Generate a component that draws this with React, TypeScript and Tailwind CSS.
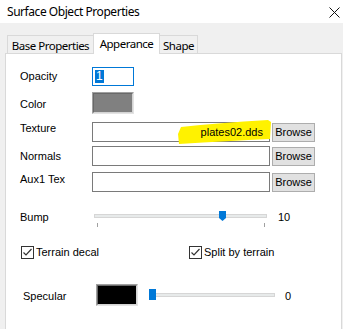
import React from "react";

const lbl = "font-['Liberation_Sans',Arial,sans-serif] text-[11px] leading-[13px] text-black";

function Swatch({ color, w }: { color: string; w: string }) {
  return (
    <div className={`${w} h-[22px] border border-t-[#a0a0a0] border-l-[#a0a0a0] border-b-[#e3e3e3] border-r-[#e3e3e3] flex`}>
      <div className={`flex-1 border border-t-[#696969] border-l-[#696969] border-b-[#d4d4d4] border-r-[#d4d4d4]`} style={{ background: color }} />
    </div>
  );
}

function BrowseButton() {
  return (
    <div className={`ml-[2px] mt-[1px] w-[43px] h-[19px] bg-[#e1e1e1] border border-[#adadad] flex items-center justify-center ${lbl}`}>
      Browse
    </div>
  );
}

function Checkbox({ label }: { label: string }) {
  return (
    <div className="flex items-center h-[13px]">
      <div className="w-[13px] h-[13px] border border-[#333333] bg-white flex items-center justify-center">
        <svg width="11" height="11" viewBox="0 0 11 11">
          <path d="M1.5 5.5 L4 8 L9.5 2" fill="none" stroke="#333333" strokeWidth="1.2" />
        </svg>
      </div>
      <span className={`ml-[2px] ${lbl} text-[11.5px]`}>{label}</span>
    </div>
  );
}

export default function App() {
  return (
    <div className="w-[343px] h-[329px] bg-[#f0f0f0] overflow-hidden flex flex-col">
      {/* Title bar */}
      <div className="h-[23px] shrink-0 bg-white flex items-center justify-between pl-[7px] pr-[2px]">
        <span className="font-['Noto_Sans',sans-serif] text-[12px] tracking-[-0.45px] leading-[16px] text-black mt-[1px]">
          Surface Object Properties
        </span>
        <svg width="11" height="11" viewBox="0 0 11 11" className="mr-[1px] mt-[2px]">
          <path d="M0.5 0.5 L10.5 10.5 M10.5 0.5 L0.5 10.5" stroke="#111" strokeWidth="1" />
        </svg>
      </div>
      <div className="h-[10px] shrink-0" />
      {/* Tabs */}
      <div className="h-[21px] shrink-0 flex items-end pl-[7px] relative z-10 font-['Noto_Sans',sans-serif] text-[11.5px] tracking-[-0.5px] text-black">
        <div className="mb-[1px] h-[18px] w-[86px] border-l border-t border-[#d9d9d9] bg-[#f0f0f0] flex items-center justify-center leading-[14px] pt-[2px]">
          Base Properties
        </div>
        <div className="h-[21px] w-[67px] border-l border-t border-r border-[#d9d9d9] bg-white flex items-start justify-center leading-[14px] pt-[3px]">
          Apperance
        </div>
        <div className="mb-[1px] h-[18px] w-[38px] border-t border-r border-[#d9d9d9] bg-[#f0f0f0] flex items-center justify-center leading-[14px] pt-[2px]">
          Shape
        </div>
      </div>
      {/* Panel */}
      <div className="-mt-[1px] ml-[5px] mr-[1px] h-[300px] shrink-0 bg-white border border-[#d9d9d9] flex flex-col pl-[14px]">
        {/* Opacity */}
        <div className="mt-[13px] h-[19px] flex items-center">
          <span className={`w-[72px] ${lbl}`}>Opacity</span>
          <div className="w-[42px] h-[19px] border border-[#0078d7] bg-white flex items-center pl-[2px]">
            <span className={`bg-[#0078d7] text-white px-[1px] ${lbl} text-[12px]`}>1</span>
          </div>
        </div>
        {/* Color */}
        <div className="mt-[6px] h-[22px] flex items-center">
          <span className={`w-[72px] ${lbl} mt-[2px]`}>Color</span>
          <Swatch color="#808080" w="w-[42px]" />
        </div>
        {/* Texture */}
        <div className="mt-[8px] h-[20px] flex items-start">
          <span className={`w-[72px] ${lbl} mt-[0px]`}>Texture</span>
          <div className="relative w-[178px] h-[20px] border border-[#7a7a7a] bg-white flex items-center justify-end pr-[6px]">
            <svg
              className="absolute left-[85px] -top-[3px]"
              width="94"
              height="25"
              viewBox="0 0 94 25"
            >
              <path d="M3 7 Q40 3 90 0 L93 2 L92 19 Q50 21 1 24 L0 14 Z" fill="#fff200" />
            </svg>
            <span className={`relative ${lbl}`}>plates02.dds</span>
          </div>
          <BrowseButton />
        </div>
        {/* Normals */}
        <div className="mt-[4px] h-[20px] flex items-center">
          <span className={`w-[72px] ${lbl}`}>Normals</span>
          <div className="w-[178px] h-[20px] border border-[#7a7a7a] bg-white" />
          <BrowseButton />
        </div>
        {/* Aux1 */}
        <div className="mt-[6px] h-[20px] flex items-start">
          <span className={`w-[72px] ${lbl} mt-[1px]`}>Aux1 Tex</span>
          <div className="w-[178px] h-[20px] border border-[#7a7a7a] bg-white" />
          <BrowseButton />
        </div>
        {/* Bump */}
        <div className="mt-[19px] h-[17px] flex items-start">
          <span className={`w-[74px] ${lbl} mt-[0px]`}>Bump</span>
          <div className="relative w-[173px] h-[17px]">
            <div className="absolute left-0 right-0 top-[3px] h-[4px] bg-[#e7eaea] border border-[#d6d6d6]" />
            <svg className="absolute left-[125px] top-0" width="7" height="10" viewBox="0 0 7 10">
              <path d="M0 0 H7 V7 L3.5 10 L0 7 Z" fill="#0078d7" />
            </svg>
            <div className="absolute left-[3px] top-[12px] w-px h-[4px] bg-[#a0a0a0]" />
            <div className="absolute left-[170px] top-[12px] w-px h-[4px] bg-[#a0a0a0]" />
          </div>
          <span className={`ml-[11px] ${lbl}`}>10</span>
        </div>
        {/* Checkboxes */}
        <div className="mt-[18px] h-[13px] flex items-center pl-[1px]">
          <div className="w-[168px]">
            <Checkbox label="Terrain decal" />
          </div>
          <Checkbox label="Split by terrain" />
        </div>
        {/* Specular */}
        <div className="mt-[25px] h-[22px] flex items-center">
          <span className={`w-[73px] ml-[3px] ${lbl} mt-[2px]`}>Specular</span>
          <Swatch color="#000000" w="w-[42px]" />
          <div className="relative ml-[11px] w-[126px] h-[22px]">
            <div className="absolute left-0 right-0 top-[9px] h-[4px] bg-[#e7eaea] border border-[#d6d6d6]" />
            <div className="absolute left-0 top-[5px] w-[7px] h-[11px] bg-[#0078d7]" />
          </div>
          <span className={`ml-[10px] ${lbl} mt-[2px]`}>0</span>
        </div>
      </div>
    </div>
  );
}
